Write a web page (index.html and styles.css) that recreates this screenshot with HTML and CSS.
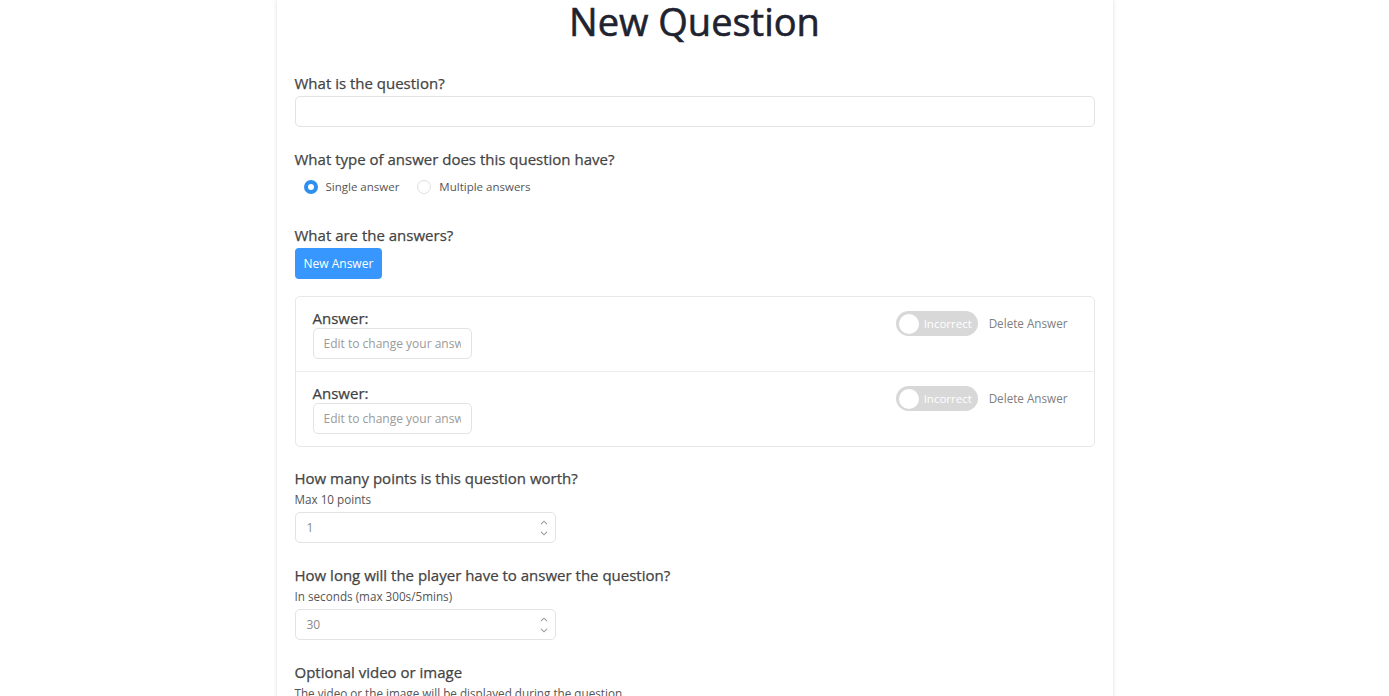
FILE: index.html
```html
<!DOCTYPE html>
<html>
<head>
<meta charset="utf-8">
<link rel="stylesheet" href="styles.css">
</head>
<body>
<main class="card">
  <h1 class="title">New Question</h1>

  <section class="field first">
    <label class="label">What is the question?</label>
    <input class="input input-wide" type="text">
  </section>

  <section class="field">
    <label class="label">What type of answer does this question have?</label>
    <div class="radios">
      <span class="radio-item"><span class="radio checked"></span>Single answer</span>
      <span class="radio-item"><span class="radio"></span>Multiple answers</span>
    </div>
  </section>

  <section class="field answers-field">
    <label class="label">What are the answers?</label>
    <div><button class="btn-primary">New Answer</button></div>
    <ul class="answers">
      <li class="answer">
        <div class="answer-main">
          <div class="answer-label">Answer:</div>
          <input class="input input-answer" type="text" placeholder="Edit to change your answer">
        </div>
        <div class="answer-actions">
          <span class="switch"><span class="knob"></span><span class="switch-text">Incorrect</span></span>
          <span class="delete">Delete Answer</span>
        </div>
      </li>
      <li class="answer">
        <div class="answer-main">
          <div class="answer-label">Answer:</div>
          <input class="input input-answer" type="text" placeholder="Edit to change your answer">
        </div>
        <div class="answer-actions">
          <span class="switch"><span class="knob"></span><span class="switch-text">Incorrect</span></span>
          <span class="delete">Delete Answer</span>
        </div>
      </li>
    </ul>
  </section>

  <section class="field points-field">
    <label class="label">How many points is this question worth?</label>
    <div class="hint">Max 10 points</div>
    <div class="number">
      <span class="number-value">1</span>
      <span class="spin">
        <svg width="8" height="5" viewBox="0 0 8 5"><path d="M1 4.2 L4 1.2 L7 4.2" fill="none" stroke="#9a9a9a" stroke-width="1.1"/></svg>
        <svg width="8" height="5" viewBox="0 0 8 5"><path d="M1 0.8 L4 3.8 L7 0.8" fill="none" stroke="#9a9a9a" stroke-width="1.1"/></svg>
      </span>
    </div>
  </section>

  <section class="field">
    <label class="label">How long will the player have to answer the question?</label>
    <div class="hint">In seconds (max 300s/5mins)</div>
    <div class="number">
      <span class="number-value">30</span>
      <span class="spin">
        <svg width="8" height="5" viewBox="0 0 8 5"><path d="M1 4.2 L4 1.2 L7 4.2" fill="none" stroke="#9a9a9a" stroke-width="1.1"/></svg>
        <svg width="8" height="5" viewBox="0 0 8 5"><path d="M1 0.8 L4 3.8 L7 0.8" fill="none" stroke="#9a9a9a" stroke-width="1.1"/></svg>
      </span>
    </div>
  </section>

  <section class="field">
    <label class="label">Optional video or image</label>
    <div class="hint">The video or the image will be displayed during the question</div>
  </section>
</main>
</body>
</html>
```

FILE: styles.css
```css
* { box-sizing: border-box; }
html, body { margin: 0; padding: 0; background: #fff; }
body {
  font-family: "Open Sans", "Noto Sans", sans-serif;
  color: #4a4a4a;
  overflow: hidden;
}
.card {
  width: 836px;
  margin: 0 auto;
  padding: 0 18px 40px;
  min-height: 800px;
  box-shadow: 0 0 4px rgba(0,0,0,0.14);
}
.title {
  margin: 0;
  font-size: 38px;
  font-weight: 400;
  line-height: 43px;
  text-align: center;
  color: #1f2330;
  -webkit-text-stroke: 0.6px #1f2330;
}
.field { margin-top: 22px; }
.field.first { margin-top: 30px; }
.label {
  display: block;
  font-size: 15px;
  line-height: 20px;
  font-weight: 400;
  color: #444;
  -webkit-text-stroke: 0.25px #444;
  margin-bottom: 3px;
}
.input {
  display: block;
  height: 31px;
  border: 1px solid #e3e3e3;
  border-radius: 5px;
  font-family: inherit;
  font-size: 12px;
  padding: 0 10px;
  color: #555;
  outline: none;
}
.input::placeholder { color: #9a9a9a; }
.input-wide { width: 800px; }

.radios { display: flex; gap: 18px; margin-top: 10px; padding-left: 9px; font-size: 11.5px; line-height: 16px; color: #555; }
.radio-item { display: flex; align-items: center; gap: 8px; }
.radio {
  width: 14px; height: 14px; border-radius: 50%;
  border: 1px solid #e0e0e0; background: #fff;
}
.radio.checked { border: 4px solid #2e8ff0; }

.answers-field { margin-top: 30px; }
.points-field { margin-top: 21px; }
.btn-primary {
  height: 31px;
  padding: 0 9px;
  border: none;
  border-radius: 4px;
  background: #3797ff;
  color: #fff;
  font-family: inherit;
  font-size: 12px;
}

.answers {
  list-style: none;
  margin: 17px 0 0;
  padding: 0;
  border: 1px solid #e8e8e8;
  border-radius: 5px;
}
.answer {
  display: flex;
  justify-content: space-between;
  height: 74px;
  padding: 12px 26px 0 17px;
}
.answer + .answer { border-top: 1px solid #ececec; height: 75px; }
.answer-label { font-size: 15px; line-height: 19px; color: #3f3f3f; -webkit-text-stroke: 0.25px #3f3f3f; }
.input-answer { width: 159px; }
.answer-actions { display: flex; align-items: flex-start; gap: 11px; padding-top: 2px; }
.switch {
  display: flex; align-items: center;
  width: 82px; height: 25px; border-radius: 13px;
  background: #d8d8d8; padding: 0 3px;
}
.knob { width: 20px; height: 20px; border-radius: 50%; background: #fff; }
.switch-text { color: #fff; font-size: 11.5px; margin-left: 5px; }
.delete { font-size: 11.7px; color: #808080; line-height: 25px; }

.hint { font-size: 11.7px; line-height: 16px; color: #555; margin-bottom: 5px; }
.number {
  display: flex; align-items: center; justify-content: space-between;
  width: 261px; height: 31px;
  border: 1px solid #e3e3e3; border-radius: 5px;
  padding: 0 6px 0 11px;
}
.number-value { font-size: 12px; color: #8a8a8a; }
.spin { display: flex; flex-direction: column; gap: 6px; padding-right: 1px; }
.spin svg { display: block; }
```
